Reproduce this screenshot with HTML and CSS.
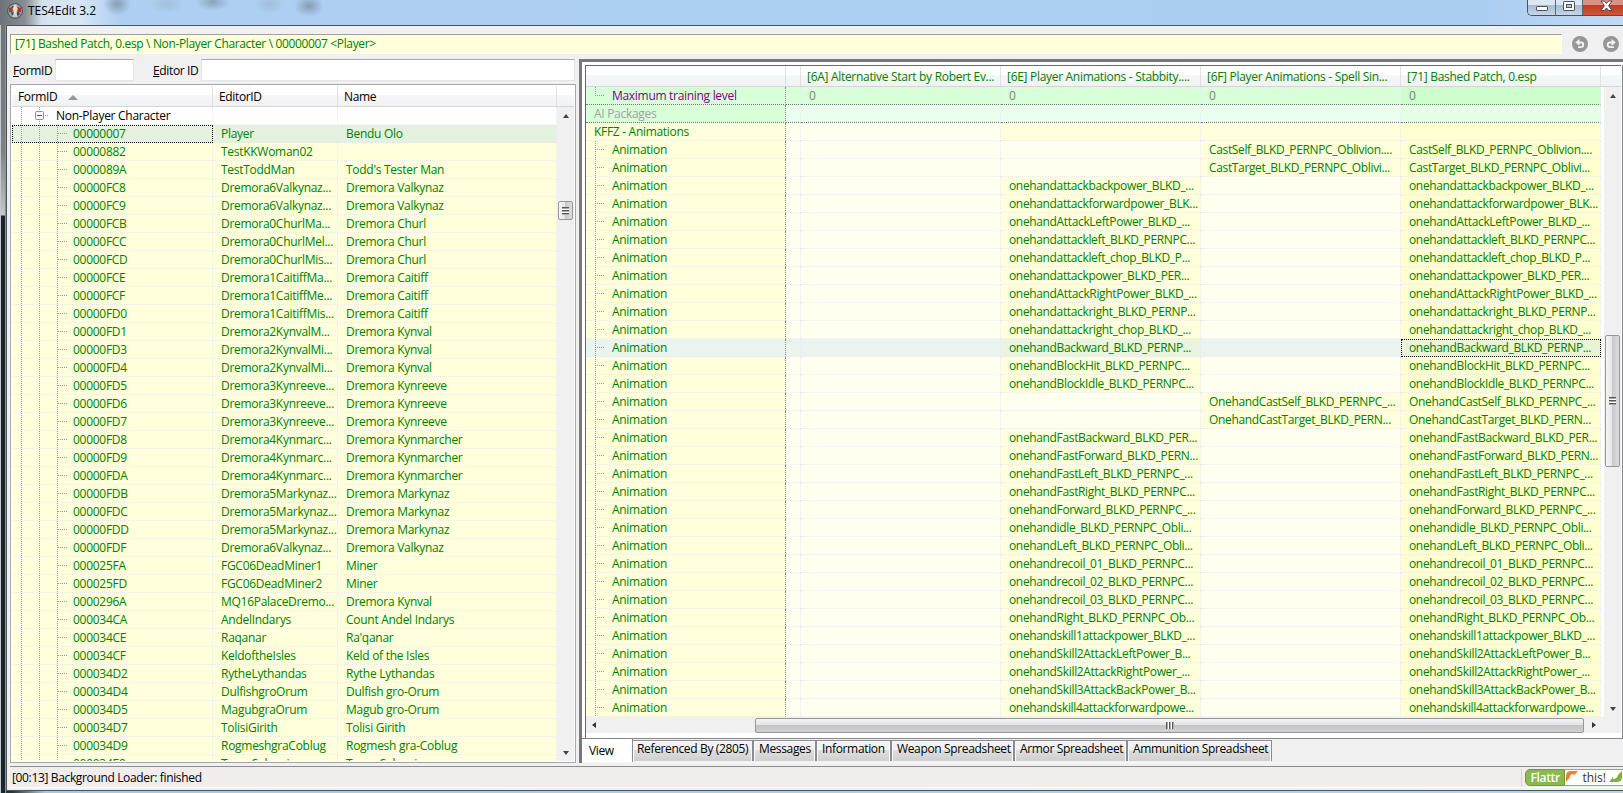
FILE: index.html
```
<!DOCTYPE html>
<html>
<head>
<meta charset="utf-8">
<title>TES4Edit 3.2</title>
<link rel="stylesheet" href="styles.css">
</head>
<body>
<div class="window">

  <div class="titlebar">
    <svg class="app-icon" width="16" height="16" viewBox="0 0 16 16">
      <circle cx="8" cy="8" r="7.4" fill="#9aa09f" stroke="#4b5153"/>
      <path d="M2 5l3-1 1 3-1 2H2z" fill="#b8332b"/>
      <path d="M14 5l-3-1-1 3 1 2h3z" fill="#a83330"/>
      <path d="M4 9h3v3H5zM10 9h2l1 2-2 2-1-1zM5 3h1v3H5z" fill="#2c5296"/>
      <path d="M7 1.500h2.500v3L11 6l-1.500 2v2l.5 4H8.500L8 10.500 7.500 14H6l.7-4V7L5 6l2-1.500z" fill="#ecdfb8"/>
    </svg>
    <span class="app-title">TES4Edit 3.2</span>
    <div class="caption-buttons">
      <div class="cap min"><svg width="14" height="8" viewBox="0 0 14 8"><rect x="1.500" y="2.500" width="11" height="4" rx=".6" fill="#fff" stroke="#4c5360"/></svg></div>
      <div class="cap max"><svg width="12" height="11" viewBox="0 0 12 11"><rect x=".5" y=".5" width="11" height="9" rx=".6" fill="#fff" stroke="#4c5360"/><rect x="3.500" y="3.500" width="5" height="3" fill="#b9cbe0" stroke="#4c5360"/></svg></div>
      <div class="cap close"><svg width="13" height="12" viewBox="0 0 13 12"><path d="M1 1h3.400L6.500 3.400 8.600 1H12L8.600 5.700 12 10.500H8.600L6.500 8 4.400 10.500H1L4.400 5.700z" fill="#fff" stroke="#5a4650"/></svg></div>
    </div>
  </div>

  <div class="client">
    <div class="pathbar">
      <div class="path">[71] Bashed Patch, 0.esp \ Non-Player Character \ 00000007 &lt;Player&gt;</div>
      <svg class="nav" width="16" height="16" viewBox="0 0 16 16"><circle cx="8" cy="8" r="8" fill="#969696"/><path d="M5 6.500h4a2.300 2.300 0 0 1 0 4.600H6" fill="none" stroke="#f2f2f2" stroke-width="1.800"/><path d="M7.500 2.800v7L3.200 6.400z" fill="#f2f2f2"/></svg>
      <svg class="nav" width="16" height="16" viewBox="0 0 16 16"><circle cx="8" cy="8" r="8" fill="#969696"/><path d="M11 6.500H7a2.300 2.300 0 0 0 0 4.600h4" fill="none" stroke="#f2f2f2" stroke-width="1.800"/><path d="M8.500 2.800v7l4.300-3.400z" fill="#f2f2f2"/></svg>
    </div>

    <div class="main">
      <div class="left">
        <div class="filters">
          <label class="lbl-form"><u>F</u>ormID</label><div class="edit edit-form"></div>
          <label class="lbl-editor"><u>E</u>ditor ID</label><div class="edit edit-editor"></div>
        </div>
        <div class="list">
          <div class="head nav-grid">
            <span>FormID <i class="sort"></i></span><span>EditorID</span><span>Name</span><span></span>
          </div>
          <div class="list-body">
            <div class="rows" id="records">
              <div class="row nav-grid group"><span class="c0"><svg class="minus" width="9" height="9" viewBox="0 0 9 9"><rect x=".5" y=".5" width="8" height="8" rx="1" fill="#f6f6f6" stroke="#919191"/><path d="M2 4.500h5" stroke="#3b55a8"/></svg>Non-Player Character</span><span></span><span></span></div>
            </div>
            <div class="vscroll">
              <i class="up"></i><div class="thumb nav-thumb"><b class="grip"></b></div><i class="down"></i>
            </div>
          </div>
        </div>
      </div>

      <div class="right">
        <div class="view">
          <div class="head view-grid">
            <span></span><span></span><span>[6A] Alternative Start by Robert Ev...</span><span>[6E] Player Animations - Stabbity....</span><span>[6F] Player Animations - Spell Sin...</span><span>[71] Bashed Patch, 0.esp</span><span></span>
          </div>
          <div class="list-body">
            <div class="rows" id="elements">
              <div class="row view-grid green"><span class="c0 last-child">Maximum training level</span><span></span><span>0</span><span>0</span><span>0</span><span>0</span></div>
              <div class="row view-grid green packages"><span class="c0">AI Packages</span><span></span><span></span><span></span><span></span><span></span></div>
              <div class="row view-grid kffz"><span class="c0">KFFZ - Animations</span><span></span><span></span><span class="has"></span><span class="has"></span><span class="has"></span></div>
            </div>
            <div class="vscroll">
              <i class="up"></i><div class="thumb view-thumb"><b class="grip"></b></div><i class="down"></i>
            </div>
          </div>
          <div class="hscroll">
            <i class="prev"></i><div class="thumb hthumb"><b class="grip vert"></b></div><i class="next"></i>
          </div>
        </div>
        <div class="tabs">
          <div class="tab active">View</div>
          <div class="tab t-ref">Referenced By (2805)</div>
          <div class="tab t-msg">Messages</div>
          <div class="tab t-info">Information</div>
          <div class="tab t-weapon">Weapon Spreadsheet</div>
          <div class="tab t-armor">Armor Spreadsheet</div>
          <div class="tab t-ammo">Ammunition Spreadsheet</div>
        </div>
      </div>
    </div>

    <div class="status">
      <span class="status-text">[00:13] Background Loader: finished</span>
      <div class="flattr">
        <span class="fl-name">Flattr</span>
        <span class="fl-this">
          <svg width="14" height="13" viewBox="0 0 14 13"><path d="M1 12V6q0-5 5-5h7L8.500 6V4Q5 4 4.500 8z" fill="#ee7f2d"/></svg>
          this!
          <svg width="14" height="13" viewBox="0 0 14 13"><path d="M0 12l4-5v2q4 0 5-4l4-4v6q0 5-5 5z" fill="#7fb142"/></svg>
        </span>
      </div>
    </div>
  </div>
</div>
<script src="main.js"></script>
</body>
</html>
```

FILE: styles.css
```
* { box-sizing: border-box; }
body {
  margin: 0;
  width: 1623px;
  height: 793px;
  overflow: hidden;
  font: 12px/16px "Open Sans", "Noto Sans", sans-serif;
  letter-spacing: -0.35px;
  color: #000;
  white-space: nowrap;
}
svg { display: block; flex: none; }
i, b { display: block; flex: none; }

.window {
  height: 793px;
  padding-left: 6px;
  background:
    linear-gradient(90deg, #c3c8ca 0 1px, transparent 1px 5px, #87939a 5px 6px, transparent 6px) 0 0 / 6px 100% no-repeat,
    linear-gradient(#6b7176 0, #7c8185 150px, #c4c6c8 215px, #1a262c 216px, #1a262c 785px) 0 0 / 6px 100% no-repeat,
    linear-gradient(90deg, #26353c 0, #26353c 12px, #a4c8e6 45px, #b4d4ee 100%);
}

/* title bar */
.titlebar {
  height: 25px;
  margin-left: -6px;
  padding-left: 7px;
  display: flex;
  background:
    radial-gradient(ellipse at center, #6b7d9099, transparent 70%) 103px -8px / 28px 24px no-repeat,
    radial-gradient(ellipse at center, #8799ac44, transparent 70%) 150px -6px / 34px 20px no-repeat,
    radial-gradient(ellipse at center, #6b7d9088, transparent 70%) 196px -7px / 34px 18px no-repeat,
    radial-gradient(ellipse at center, #8799ac55, transparent 70%) 255px -6px / 28px 20px no-repeat,
    radial-gradient(ellipse at center, #6b7d9099, transparent 70%) 294px -5px / 30px 22px no-repeat,
    linear-gradient(90deg, #6d7479 0, #868d93 25px, #d5e2ee 42px, #d7e6f5 80px, #aecff1 120px, #aacdf1 1480px, #c2daf2 1623px);
}
.app-icon { margin-top: 3px; }
.app-title { margin: 3px 0 0 5px; letter-spacing: 0; }
.caption-buttons {
  margin-left: auto;
  width: 96px;
  height: 16px;
  display: flex;
  border: 1px solid #46525f;
  border-width: 0 0 1px 1px;
  border-radius: 0 0 0 5px;
  overflow: hidden;
}
.cap {
  width: 28px;
  display: flex;
  align-items: center;
  justify-content: center;
  background: linear-gradient(#dbe7f3 0 5px, #a5bbd2 5px, #c4d6e9);
  border-right: 1px solid #5b6673;
}
.cap.max { width: 27px; }
.cap.max svg { margin-top: -2px; }
.cap.close { flex: 1; background: linear-gradient(#d99285 0 5px, #bd3b22 5px, #d0553a); border: 0; padding-left: 7px; }
.cap.close svg { margin-top: -4px; }

/* client area */
.client {
  height: 766px;
  border: 1px solid #4a555e;
  border-right: 0;
  background: #f0f0f0;
  display: flex;
  flex-direction: column;
  padding: 8px 0 0 3px;
}
.pathbar { height: 20px; display: flex; align-items: center; }
.path {
  width: 1552px;
  height: 20px;
  border: 1px solid #a0a0a0;
  border-right-color: #fff;
  border-bottom-color: #fff;
  background: #ffffdc;
  color: #008000;
  padding: 1px 4px;
}
.nav { margin-left: 10px; }
.nav + .nav { margin-left: 15px; }

.main { display: flex; margin-top: 5px; height: 704px; }
.left { width: 566px; }
.filters { display: flex; height: 25px; }
.filters label { padding-top: 4px; }
.lbl-form { width: 45px; padding-left: 3px; }
.lbl-editor { width: 67px; padding-left: 19px; }
.edit { height: 22px; background: #fff; border: 1px solid #e2e3ea; border-top-color: #abadb3; border-radius: 1px; }
.edit-form { width: 79px; }
.edit-editor { width: 374px; }
.list {
  height: 679px;
  border: 1px solid #a3a8b0;
  background: #fff;
  padding: 1px;
  display: flex;
  flex-direction: column;
}

.head { height: 21px; background: linear-gradient(#fff 0 9px, #f5f6f8 9px, #f1f2f4); border-bottom: 1px solid #d5d5d5; }
.head span { padding: 3px 0 0 6px; border-right: 1px solid #dfe0e3; display: flex; overflow: hidden; white-space: pre; }
.head span:last-child { border: 0; }
.view .head { color: #008000; letter-spacing: -0.3px; }
.sort { margin: 6px 0 0 8px; width: 0; height: 0; border: 5px solid transparent; border-top: 0; border-bottom-color: #999; }
.nav-grid { display: grid; grid-template-columns: 201px 125px 219px 1fr; }
.view-grid { display: grid; grid-template-columns: 200px 15px 200px 200px 200px 200px 1fr; }

.list-body { display: flex; flex: 1; min-height: 0; }
.rows { flex: 1; overflow: hidden; }
.row { height: 18px; color: #008000; }
.row span {
  height: 18px;
  padding-top: 1px;
  border-right: 1px dotted #e8e8f8;
  border-bottom: 1px dotted #e8e8f8;
  background-color: #ffffdc;
  overflow: hidden;
}

/* record list; each cell draws its own part of the tree lines */
.list .row { grid-template-columns: 201px 125px 219px; letter-spacing: -0.28px; }
.list .row span { padding-left: 8px; }
.list .row .c0 {
  padding-left: 61px;
  background-image:
    repeating-linear-gradient(#999 0 1px, transparent 1px 2px),
    repeating-linear-gradient(#999 0 1px, transparent 1px 2px),
    repeating-linear-gradient(#999 0 1px, transparent 1px 2px),
    repeating-linear-gradient(90deg, #999 0 1px, transparent 1px 2px);
  background-size: 1px 18px, 1px 18px, 1px 18px, 10px 1px;
  background-position: 9px 0, 27px 0, 45px 0, 46px 8px;
  background-repeat: no-repeat;
}
.list .group span { background-color: #fff; color: #000; }
.list .group .c0 { display: flex; align-items: center; padding-top: 0; padding-left: 23px; background-position: 9px 0, 27px 0, -5px 0, 31px 8px; background-size: 1px 18px, 1px 18px, 1px 18px, 6px 1px; }
.minus { margin-right: 12px; }
.list .selected span { background-color: #e4f1de; }
.list .selected .c0, .focus { outline: 1px dotted #000; outline-offset: -1px; }

/* element view */
.right {
  flex: 1;
  margin-left: 3px;
  border-left: 3px solid #77777c;
  border-top: 3px solid #77777c;
  background: #fff;
  display: flex;
  flex-direction: column;
}
.view {
  width: 1036px;
  height: 675px;
  margin-left: 3px;
  margin-top: 3px;
  border: 1px solid #69696e;
  border-width: 1px 0 0 1px;
  box-shadow: 1px 0 #fff, 3px 0 #85858c;
  display: flex;
  flex-direction: column;
}
.view .list-body { flex: none; height: 630px; }
.view .row span { padding-left: 8px; background-color: #fffff0; }
.view .row .c0 { padding-left: 26px; border-right-color: #888; background-color: #ffffdc; letter-spacing: -0.3px; }
.view .row .has { background-color: #ffffdc; }
.view .row .has:last-child { background-color: #ffffcf; }
.view .anim .c0 {
  background-image:
    repeating-linear-gradient(#999 0 1px, transparent 1px 2px),
    repeating-linear-gradient(90deg, #999 0 1px, transparent 1px 2px);
  background-size: 1px 18px, 10px 1px;
  background-position: 9px 0, 9px 8px;
  background-repeat: no-repeat;
}
.view .green span, .view .green .c0 { background-color: #d9ffd9; border-bottom-color: #777; color: #808080; }
.view .green span:last-child { background-color: #ccffcc; }
.view .green .last-child {
  color: #800080;
  background-image:
    repeating-linear-gradient(#999 0 1px, transparent 1px 2px),
    repeating-linear-gradient(90deg, #999 0 1px, transparent 1px 2px);
  background-size: 1px 9px, 10px 1px;
  background-position: 9px 0, 9px 8px;
  background-repeat: no-repeat;
}
.view .packages span { background-color: #ebffee; }
.view .packages span:last-child { background-color: #e4ffe6; }
.view .packages .c0 { color: #a0a0a0; }
.view .packages .c0, .view .kffz .c0 { padding-left: 8px; }
.view .selected span, .view .selected .c0 { background-color: #eaf4ee; }
.view .selected .has { background-color: #eaf4de; }
.view .selected .has:last-child { background-color: #eaf4d4; }

/* scrollbars */
.vscroll { width: 17px; background: #f0f0f0; display: flex; flex-direction: column; align-items: center; padding: 5px 0 6px; }
.up, .down, .prev, .next { width: 0; height: 0; border: 3.5px solid transparent; }
.up { border-top: 0; border-bottom: 4px solid #444; margin-top: 2px; }
.down { border-bottom: 0; border-top: 4px solid #444; margin-top: auto; }
.thumb { border: 1px solid #979797; border-radius: 2px; background: linear-gradient(90deg, #f5f5f5, #e6e6e8 45%, #cbcbcf 50%, #dcdcdf); display: flex; align-items: center; justify-content: center; }
.nav-thumb { width: 15px; height: 19px; margin-top: 83px; }
.view-thumb { width: 15px; height: 132px; margin-top: 237px; }
.grip { width: 7px; height: 8px; background: repeating-linear-gradient(#555 0 1px, #aaa 1px 2px, #fff 2px 3px); }
.grip.vert { width: 8px; height: 7px; background: repeating-linear-gradient(90deg, #555 0 1px, #aaa 1px 2px, #fff 2px 3px); }
.hscroll { height: 16px; display: flex; align-items: center; background: #f0f0f0; }
.hthumb { width: 829px; height: 15px; background: linear-gradient(#f5f5f5, #e4e4e6 45%, #c4c4c6 50%, #d2d2d4); }
.prev { border-left: 0; border-right: 4px solid #333; margin: 0 159px 0 6px; }
.next { border-right: 0; border-left: 4px solid #333; margin-left: 8px; }

/* page tabs */
.tabs { flex: 1; display: flex; background: #f0f0f0; border-top: 1px solid #85858c; border-bottom: 1px solid #f8f8f8; }
.tab {
  height: 21px;
  margin-top: 1px;
  border-top: 1px solid #898c95;
  border-right: 2px solid #898c95;
  background: linear-gradient(#f2f2f2 0 9px, #dfdfdf 9px, #cfcfcf);
  box-shadow: inset 1px 1px #fafafa, inset -1px 0 #fafafa;
  padding: 0 0 0 5px;
}
.tab.active { width: 51px; height: 23px; margin-top: 0; padding: 4px 0 0 7px; background: #fff; border-top: 0; border-right-width: 1px; }
.t-ref { width: 121px; padding-left: 4px; }
.t-msg { width: 63px; }
.t-info { width: 75px; }
.t-weapon { width: 123px; }
.t-armor { width: 113px; }
.t-ammo { width: 144px; border-right-width: 1px; }

/* status bar */
.status {
  height: 22px;
  margin-top: 3px;
  border: 1px solid #8c8c8c;
  border-right: 0;
  border-left: 0;
  border-bottom-color: #fff;
  background: #f1edec;
  display: flex;
  padding: 2px 0 0 2px;
}
.status-text { padding-top: 1px; }
.flattr { margin-left: auto; width: 102px; display: flex; border-left: 1px solid #d5d2d2; padding-left: 3px; }
.fl-name { width: 43px; height: 17px; border-radius: 5px 0 0 5px; background: #8bb84f; border: 1px solid #6f9a39; color: #fff; font-weight: 600; text-align: center; line-height: 16px; }
.fl-this { flex: 1; height: 17px; background: #fff; border: 1px solid #8fae6a; border-width: 1px 0; display: flex; gap: 3px; line-height: 16px; color: #333; letter-spacing: 0; }
```

FILE: main.js
```
var records = [
  ["00000007", "Player", "Bendu Olo"],
  ["00000882", "TestKKWoman02", ""],
  ["0000089A", "TestToddMan", "Todd's Tester Man"],
  ["00000FC8", "Dremora6Valkynaz...", "Dremora Valkynaz"],
  ["00000FC9", "Dremora6Valkynaz...", "Dremora Valkynaz"],
  ["00000FCB", "Dremora0ChurlMa...", "Dremora Churl"],
  ["00000FCC", "Dremora0ChurlMel...", "Dremora Churl"],
  ["00000FCD", "Dremora0ChurlMis...", "Dremora Churl"],
  ["00000FCE", "Dremora1CaitiffMa...", "Dremora Caitiff"],
  ["00000FCF", "Dremora1CaitiffMe...", "Dremora Caitiff"],
  ["00000FD0", "Dremora1CaitiffMis...", "Dremora Caitiff"],
  ["00000FD1", "Dremora2KynvalM...", "Dremora Kynval"],
  ["00000FD3", "Dremora2KynvalMi...", "Dremora Kynval"],
  ["00000FD4", "Dremora2KynvalMi...", "Dremora Kynval"],
  ["00000FD5", "Dremora3Kynreeve...", "Dremora Kynreeve"],
  ["00000FD6", "Dremora3Kynreeve...", "Dremora Kynreeve"],
  ["00000FD7", "Dremora3Kynreeve...", "Dremora Kynreeve"],
  ["00000FD8", "Dremora4Kynmarc...", "Dremora Kynmarcher"],
  ["00000FD9", "Dremora4Kynmarc...", "Dremora Kynmarcher"],
  ["00000FDA", "Dremora4Kynmarc...", "Dremora Kynmarcher"],
  ["00000FDB", "Dremora5Markynaz...", "Dremora Markynaz"],
  ["00000FDC", "Dremora5Markynaz...", "Dremora Markynaz"],
  ["00000FDD", "Dremora5Markynaz...", "Dremora Markynaz"],
  ["00000FDF", "Dremora6Valkynaz...", "Dremora Valkynaz"],
  ["000025FA", "FGC06DeadMiner1", "Miner"],
  ["000025FD", "FGC06DeadMiner2", "Miner"],
  ["0000296A", "MQ16PalaceDremo...", "Dremora Kynval"],
  ["000034CA", "AndelIndarys", "Count Andel Indarys"],
  ["000034CE", "Raqanar", "Ra'qanar"],
  ["000034CF", "KeldoftheIsles", "Keld of the Isles"],
  ["000034D2", "RytheLythandas", "Rythe Lythandas"],
  ["000034D4", "DulfishgroOrum", "Dulfish gro-Orum"],
  ["000034D5", "MagubgraOrum", "Magub gro-Orum"],
  ["000034D7", "TolisiGirith", "Tolisi Girith"],
  ["000034D9", "RogmeshgraCoblug", "Rogmesh gra-Coblug"],
  ["000034E0", "TovasSelvani", "Tovas Selvani"]
];

// column (6E or 6F) that supplies the animation, and its file
var animations = [
  ["6F", "CastSelf_BLKD_PERNPC_Oblivion...."],
  ["6F", "CastTarget_BLKD_PERNPC_Oblivi..."],
  ["6E", "onehandattackbackpower_BLKD_..."],
  ["6E", "onehandattackforwardpower_BLK..."],
  ["6E", "onehandAttackLeftPower_BLKD_..."],
  ["6E", "onehandattackleft_BLKD_PERNPC..."],
  ["6E", "onehandattackleft_chop_BLKD_P..."],
  ["6E", "onehandattackpower_BLKD_PER..."],
  ["6E", "onehandAttackRightPower_BLKD_..."],
  ["6E", "onehandattackright_BLKD_PERNP..."],
  ["6E", "onehandattackright_chop_BLKD_..."],
  ["6E", "onehandBackward_BLKD_PERNP..."],
  ["6E", "onehandBlockHit_BLKD_PERNPC..."],
  ["6E", "onehandBlockIdle_BLKD_PERNPC..."],
  ["6F", "OnehandCastSelf_BLKD_PERNPC_..."],
  ["6F", "OnehandCastTarget_BLKD_PERN..."],
  ["6E", "onehandFastBackward_BLKD_PER..."],
  ["6E", "onehandFastForward_BLKD_PERN..."],
  ["6E", "onehandFastLeft_BLKD_PERNPC_..."],
  ["6E", "onehandFastRight_BLKD_PERNPC..."],
  ["6E", "onehandForward_BLKD_PERNPC_..."],
  ["6E", "onehandidle_BLKD_PERNPC_Obli..."],
  ["6E", "onehandLeft_BLKD_PERNPC_Obli..."],
  ["6E", "onehandrecoil_01_BLKD_PERNPC..."],
  ["6E", "onehandrecoil_02_BLKD_PERNPC..."],
  ["6E", "onehandrecoil_03_BLKD_PERNPC..."],
  ["6E", "onehandRight_BLKD_PERNPC_Ob..."],
  ["6E", "onehandskill1attackpower_BLKD_..."],
  ["6E", "onehandSkill2AttackLeftPower_B..."],
  ["6E", "onehandSkill2AttackRightPower_..."],
  ["6E", "onehandSkill3AttackBackPower_B..."],
  ["6E", "onehandskill4attackforwardpowe..."]
];
var selectedAnimation = 11;

function addRow(parent, className, cells) {
  var row = document.createElement("div");
  row.className = "row " + className;
  cells.forEach(function (cell) {
    var span = document.createElement("span");
    span.textContent = cell[0];
    if (cell[1]) span.className = cell[1];
    row.appendChild(span);
  });
  parent.appendChild(row);
}

var recordRows = document.getElementById("records");
records.forEach(function (r, i) {
  addRow(recordRows, "nav-grid" + (i === 0 ? " selected" : ""), [[r[0], "c0"], [r[1]], [r[2]]]);
});

var elementRows = document.getElementById("elements");
animations.forEach(function (a, i) {
  var sel = i === selectedAnimation;
  addRow(elementRows, "view-grid anim" + (sel ? " selected" : ""), [
    ["Animation", "c0"],
    [""],
    [""],
    a[0] === "6E" ? [a[1], "has"] : [""],
    a[0] === "6F" ? [a[1], "has"] : [""],
    [a[1], sel ? "has focus" : "has"]
  ]);
});
```
